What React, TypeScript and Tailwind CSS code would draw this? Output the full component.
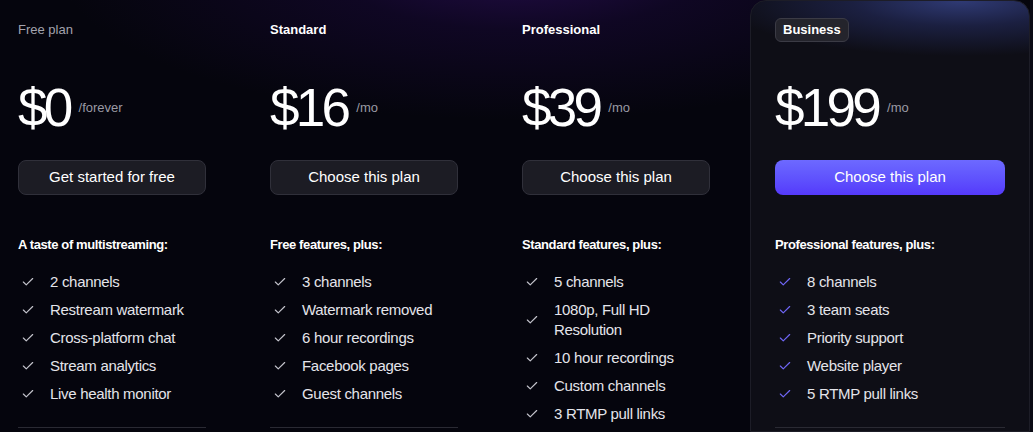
import { Check } from "lucide-react";

interface Plan {
    label: string;
    price: string;
    period: string;
    cta: string;
    heading: string;
    features: string[];
    highlight?: boolean;
    muted?: boolean;
}

const plans: Plan[] = [
    {
        label: "Free plan",
        price: "$0",
        period: "/forever",
        cta: "Get started for free",
        heading: "A taste of multistreaming:",
        features: ["2 channels", "Restream watermark", "Cross-platform chat", "Stream analytics", "Live health monitor"],
        muted: true,
    },
    {
        label: "Standard",
        price: "$16",
        period: "/mo",
        cta: "Choose this plan",
        heading: "Free features, plus:",
        features: ["3 channels", "Watermark removed", "6 hour recordings", "Facebook pages", "Guest channels"],
    },
    {
        label: "Professional",
        price: "$39",
        period: "/mo",
        cta: "Choose this plan",
        heading: "Standard features, plus:",
        features: ["5 channels", "1080p, Full HD Resolution", "10 hour recordings", "Custom channels", "3 RTMP pull links"],
    },
    {
        label: "Business",
        price: "$199",
        period: "/mo",
        cta: "Choose this plan",
        heading: "Professional features, plus:",
        features: ["8 channels", "3 team seats", "Priority support", "Website player", "5 RTMP pull links"],
        highlight: true,
    },
];

function PlanColumn({ plan }: { plan: Plan }) {
    return (
        <div className="flex flex-col">
            <div className="h-6 flex items-center">
                {plan.highlight ? (
                    <span className="h-6 px-[7px] flex items-center rounded-md bg-[#24242c] border border-[#3b3b45] text-[13px] font-semibold text-white">
                        {plan.label}
                    </span>
                ) : (
                    <span className={plan.muted ? "text-[13px] text-[#a3a3ad]" : "text-[13px] font-semibold text-white"}>
                        {plan.label}
                    </span>
                )}
            </div>

            <div className="mt-9 h-[58px] flex items-center gap-[9px]">
                <span className="text-[53px] leading-none tracking-[-0.07em] text-white">{plan.price}</span>
                <span className="text-[13px] text-[#9a9aa4] mt-[2px]">{plan.period}</span>
            </div>

            <button
                className={
                    plan.highlight
                        ? "mt-6 h-[35px] w-full rounded-lg bg-gradient-to-b from-[#6d69ff] to-[#5539fb] text-[15px] font-medium text-white"
                        : "mt-6 h-[35px] w-full rounded-lg bg-[#1c1c24] border border-[#30303a] text-[15px] font-medium text-white"
                }
            >
                {plan.cta}
            </button>

            <div className="mt-10 h-5 flex items-center text-[13px] font-bold text-white tracking-[-0.03em]">
                {plan.heading}
            </div>

            <ul className="mt-[17px] flex flex-col gap-2">
                {plan.features.map((f) => (
                    <li key={f} className="flex items-center gap-[15px] pl-[3px]">
                        <Check
                            className={plan.highlight ? "w-[14px] h-[14px] shrink-0 text-[#6f66f6]" : "w-[14px] h-[14px] shrink-0 text-[#c4c4cc]"}
                            strokeWidth={2}
                        />
                        <span className="text-[15px] leading-5 text-[#e4e4ea] tracking-[-0.02em] max-w-[150px]">{f}</span>
                    </li>
                ))}
            </ul>

            <div className="mt-[23px] h-px w-full bg-[#2a2a33]" />
        </div>
    );
}

export default function App() {
    return (
        <div
            className="w-[1033px] h-[432px] overflow-hidden bg-[#05050d] bg-[radial-gradient(ellipse_460px_150px_at_520px_-30px,#220c46_0%,rgba(22,8,50,0.6)_40%,transparent_100%)] flex pl-[18px]"
            style={{ fontFamily: '"Liberation Sans", Arial, sans-serif' }}
        >
            <div className="w-[252px] pr-16 shrink-0 pt-[18px]">
                <PlanColumn plan={plans[0]} />
            </div>
            <div className="w-[252px] pr-16 shrink-0 pt-[18px]">
                <PlanColumn plan={plans[1]} />
            </div>
            <div className="w-[228px] pr-10 shrink-0 pt-[18px]">
                <PlanColumn plan={plans[2]} />
            </div>
            <div className="w-[280px] shrink-0 rounded-t-2xl border border-[#1d1d27] bg-[#0e0e16] bg-[radial-gradient(ellipse_240px_55px_at_210px_0px,#2f3a74_0%,rgba(38,46,100,0.55)_45%,transparent_100%)] pl-[24px] pr-[24px] pt-[17px]">
                <PlanColumn plan={plans[3]} />
            </div>
            <div className="w-[4px] shrink-0 bg-[#0a0a14]" />
        </div>
    );
}
